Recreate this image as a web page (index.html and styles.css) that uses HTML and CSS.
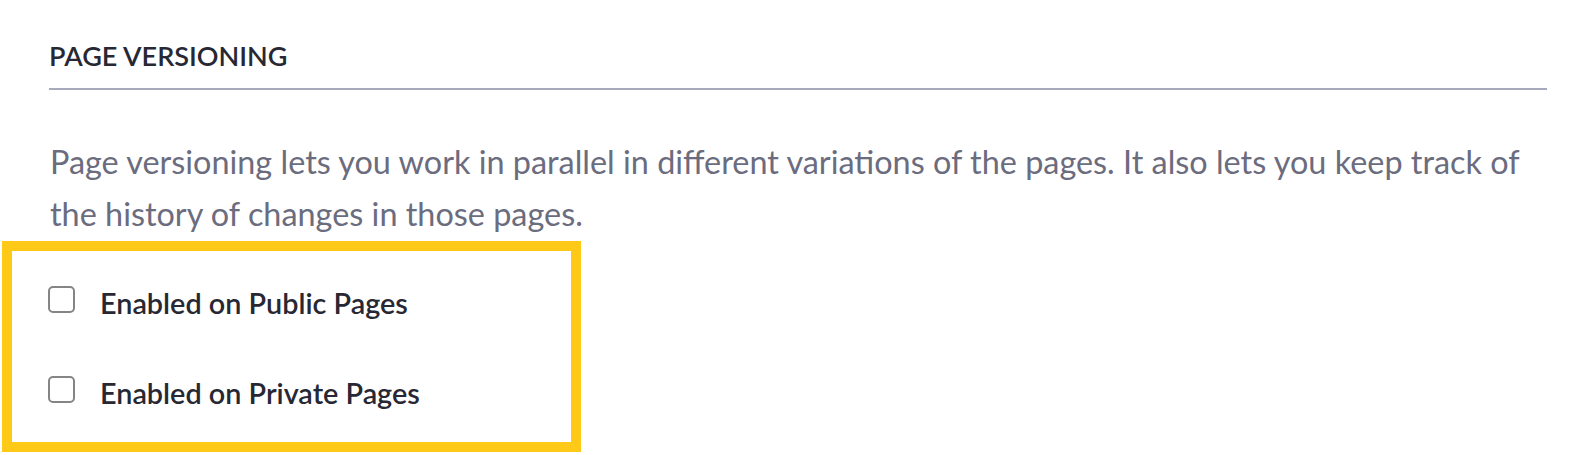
FILE: index.html
```html
<!DOCTYPE html>
<html lang="en">
<head>
<meta charset="utf-8">
<title>Page Versioning</title>
<link rel="stylesheet" href="styles.css">
</head>
<body>
<section class="sheet">
  <h2 class="sheet-subtitle">PAGE VERSIONING</h2>
  <p class="sheet-text">Page versioning lets you work in parallel in different variations of the pages. It also lets you keep track of the history of changes in those pages.</p>
  <div class="highlight">
    <label class="check-row">
      <input type="checkbox" class="check">
      <span class="check-label">Enabled on Public Pages</span>
    </label>
    <label class="check-row">
      <input type="checkbox" class="check">
      <span class="check-label">Enabled on Private Pages</span>
    </label>
  </div>
</section>
</body>
</html>
```

FILE: styles.css
```css
* { box-sizing: border-box; }
html, body { margin: 0; padding: 0; background: #fff; }
body {
  font-family: Lato, "Open Sans", "Liberation Sans", sans-serif;
  color: #272833;
}
.sheet {
  width: 1596px;
  padding: 39px 49px 0 48px;
}
.sheet-subtitle {
  margin: 0 0 0 1px;
  font-size: 27px;
  font-weight: 600;
  line-height: 34px;
  color: #272833;
  padding-bottom: 15px;
  border-bottom: 2px solid #a7a9bc;
}
.sheet-text {
  margin: 46px 0 0 2px;
  font-size: 32.4px;
  line-height: 52px;
  color: #6b6c7e;
}
.highlight {
  margin: 1px 0 0 -46px;
  width: 579px;
  border: 10px solid #ffc918;
  padding: 35px 0 29px 36px;
  display: flex;
  flex-direction: column;
  gap: 53px;
}
.check-row {
  display: flex;
  align-items: flex-start;
}
.check {
  appearance: none;
  -webkit-appearance: none;
  margin: 0;
  width: 27px;
  height: 27px;
  border: 2px solid #858585;
  border-radius: 5px;
  background: #fff;
  flex: none;
}
.check-label {
  margin: -3px 0 0 25px;
  font-size: 28.8px;
  font-weight: 600;
  line-height: 40px;
  height: 40px;
  color: #272833;
}
```
